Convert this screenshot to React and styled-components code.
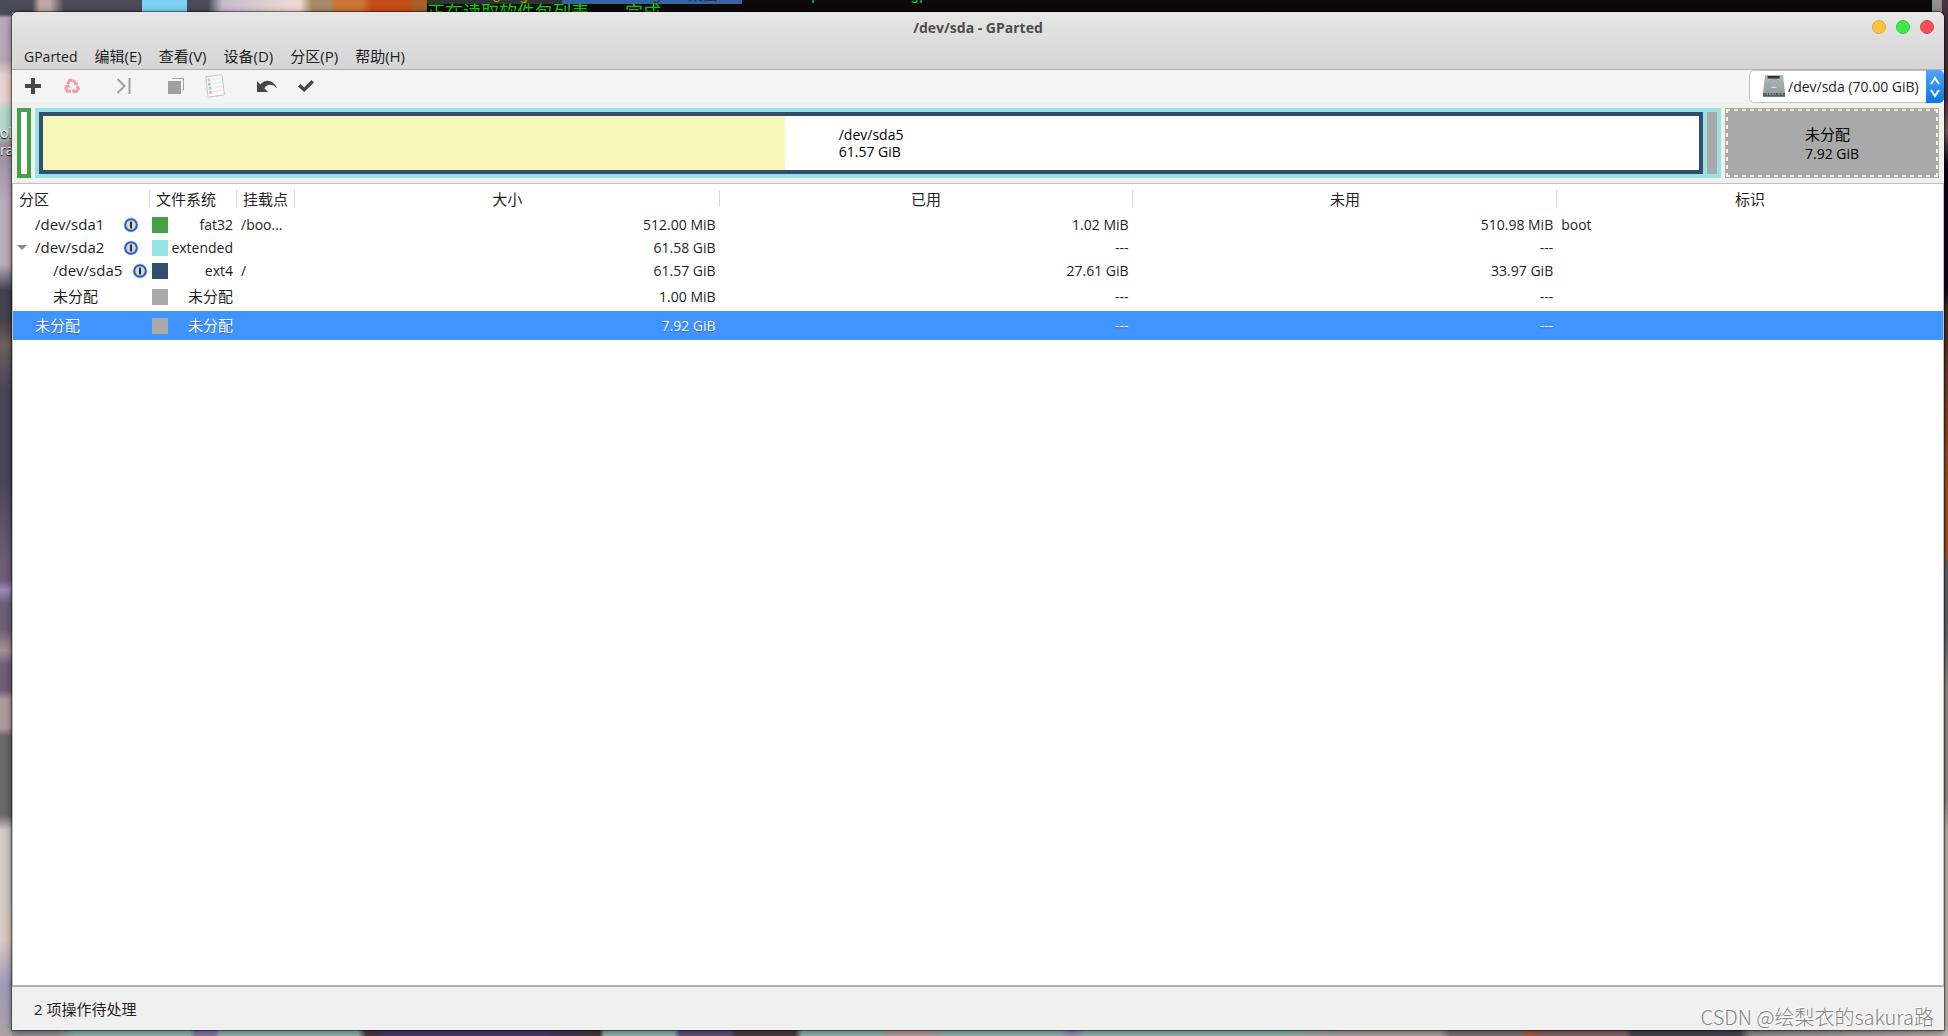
import React from "react";
import styled, { createGlobalStyle, css } from "styled-components";

const GlobalStyle = createGlobalStyle`
  * {
    box-sizing: border-box;
  }
  body {
    margin: 0;
    font-family: "Open Sans", "Noto Sans", "Noto Sans CJK SC", sans-serif;
    font-size: 14px;
    line-height: 17px;
    color: #1f1f1f;
  }
  button, select {
    font: inherit;
    color: inherit;
    margin: 0;
    padding: 0;
    border: 0;
    background: none;
  }
`;

const largeText = css`
  font-size: 15px;
`;

const Desktop = styled.div`
  position: relative;
  display: flex;
  min-height: 100vh;
  padding: 12px 4px 6px 12px;
  overflow: hidden;
  background-color: #8d8590;
  background-image:
    linear-gradient(90deg, #4b4a57 0 32px, #c0a8a4 40px 50px, #4b4a57 64px 142px, #7fd0f5 142px 187px, #4b4a57 187px 208px, #c6bccb 222px, #eed8d4 290px 300px, #a58a68 312px 330px, #cc7433 336px 362px, #c44e18 372px 406px, #a85f2c 416px 427px),
    linear-gradient(#4b4a57 0 14px, #b5a9b6 18px 60px, #e8d2cd 75px 100px, #b5d8cc 110px 132px, #9b8fa0 145px, #b9adb9 200px 265px, #45434d 290px 320px, #6f605f 345px, #4b4758 390px 480px, #6c5e76 560px 580px, #9a8cba 590px, #6f6076 604px 630px, #a89496 650px, #6e6078 665px 690px, #b09c9e 700px 728px, #6b686c 736px 815px, #d0ccc6 830px 900px, #ddc9c0 940px, #9e9cba 985px, #aea4a6 1036px),
    linear-gradient(#4a3040 0 100px, #7c5c58 130px, #15041f 165px 290px, #4a2a28 310px, #a5561c 485px 555px, #65656c 565px 630px, #98908e 690px 800px, #c4bcb4 830px 1036px),
    linear-gradient(90deg, #9a9499 0 55px, #94bfba 75px 190px, #8d80ab 195px 215px, #94bfba 220px 358px, #503b48 366px 375px, #4d3b72 385px 540px, #4a3a40 600px, #94bfba 604px 674px, #64547c 680px 730px, #503f44 735px 795px, #94bfba 802px 880px, #bfa8a6 892px 930px, #94bfba 945px 1060px, #9c90b8 1072px, #94bfba 1085px 1270px, #b8a8aa 1350px 1440px, #85767a 1450px 1520px, #c05a3c 1530px, #886a6c 1545px 1625px, #4c4858 1632px 1740px, #98929a 1750px, #beb4ac 1948px);
  background-size: 427px 12px, 12px 100%, 6px 100%, 100% 6px;
  background-position: left top, left top, right top, left bottom;
  background-repeat: no-repeat;
`;

/* terminal window lying behind the main one */
const Terminal = styled.div`
  position: absolute;
  top: -11px;
  left: 427px;
  right: 7px;
  border-right: 9px solid #8f8f8f;
  background: #0f090b;
  color: #00d800;
  font: 15px/16px "Liberation Mono", "Noto Sans CJK SC", monospace;
  white-space: pre;
`;

const PromptLine = styled.div`
  display: flex;
  height: 15px;
`;

const PromptUser = styled.span`
  padding: 0 16px 0 20px;
  background: #2e3436;
  color: #c4a000;
`;

const PromptPath = styled.span`
  padding: 0 24px 0 18px;
  margin-right: 15px;
  background: #3465a4;
  color: #2e3436;
`;

const OutputLine = styled.div`
  display: flex;
  gap: 36px;
  font-size: 18px;
  line-height: 20px;
`;

const DesktopLabel = styled.span`
  position: absolute;
  top: 124px;
  left: 0;
  width: 14px;
  overflow: hidden;
  color: #fff;
  text-shadow: 0 1px 1px #000;
`;

const Window = styled.main`
  position: relative;
  display: flex;
  flex-direction: column;
  flex: 1;
  min-width: 0;
  border-radius: 6px 6px 0 0;
  overflow: hidden;
  background: #f0f0f0;
  box-shadow: 0 0 1px 1px rgba(0, 0, 0, 0.45), 0 2px 8px rgba(0, 0, 0, 0.5);
`;

const Header = styled.header`
  height: 58px;
  border-bottom: 1px solid #b2b2b2;
  background: linear-gradient(#e6e6e6, #d5d5d5);
`;

const TitleBar = styled.div`
  display: grid;
  grid-template-columns: 1fr auto 1fr;
  align-items: center;
  height: 30px;
  padding: 0 10px;
`;

const Title = styled.h1`
  grid-column: 2;
  margin: 0;
  font-size: 14px;
  font-weight: 700;
  color: #504b4b;
`;

const WindowButtons = styled.div`
  display: flex;
  justify-content: flex-end;
  gap: 10px;
`;

const WindowButton = styled.button`
  width: 14px;
  height: 14px;
  border: 1px solid ${(p) => p.$edge};
  border-radius: 50%;
  background: ${(p) => p.$color};
`;

const MenuBar = styled.nav`
  display: flex;
  align-items: flex-end;
  height: 27px;
  padding-left: 4px;
`;

const MenuButton = styled.button`
  padding: 0 9px 0 8px;
  line-height: 25px;
  ${(p) => p.$large && largeText}
`;

const Toolbar = styled.div`
  display: flex;
  height: 33px;
  padding-left: 1px;
  background: #f4f4f4;
`;

const ToolButton = styled.button`
  display: flex;
  align-items: center;
  justify-content: center;
  width: 39px;
  margin-right: ${(p) => (p.$last ? "13px" : "0")};
  padding-bottom: 2px;
`;

const DevicePicker = styled.div`
  position: relative;
  display: flex;
  margin-left: auto;
`;

const DeviceSelect = styled.select`
  appearance: none;
  width: 195px;
  padding: 0 0 0 38px;
  border: 1px solid #c4c4c4;
  border-right: 0;
  border-radius: 5px;
  background: #fff;
`;

const DiskSlot = styled.span`
  position: absolute;
  top: 4px;
  left: 14px;
  pointer-events: none;
`;

const SelectArrows = styled.span`
  position: absolute;
  top: 0;
  right: 0;
  display: flex;
  align-items: center;
  justify-content: center;
  width: 18px;
  height: 33px;
  border-radius: 0 5px 5px 0;
  background: linear-gradient(#55a3fb, #0a78e4);
  pointer-events: none;
`;

const DiskMap = styled.section`
  display: flex;
  gap: 4px;
  height: 80px;
  padding: 5px;
`;

const PartitionBox = styled.div`
  display: flex;
  align-items: center;
  justify-content: center;
  flex: ${(p) => p.$flex || "0 0 auto"};
  gap: 4px;
  min-width: ${(p) => (p.$color ? "14px" : "10px")};
  border: ${(p) => (p.$color ? `4px solid ${p.$color}` : "0")};
  background: ${(p) => p.$fill || "#fff"};
`;

const Nested = styled(PartitionBox)`
  align-items: stretch;
`;

const dash = (dir) =>
  `repeating-linear-gradient(${dir}, #f7f7b9 0 4px, transparent 4px 8px)`;

const SelectedBox = styled(PartitionBox)`
  border: 1px solid #a9a9a9;
  background-color: #a9a9a9;
  background-image: ${dash("90deg")}, ${dash("90deg")}, ${dash("180deg")}, ${dash("180deg")};
  background-size: 100% 2px, 100% 2px, 2px 100%, 2px 100%;
  background-position: left top, left bottom, left top, right top;
  background-repeat: no-repeat;
`;

const BoxLabel = styled.div`
  color: #000;
`;

const BoxName = styled.div`
  ${(p) => p.$cjk && css`
    ${largeText}
    line-height: 21px;
  `}
`;

const ListArea = styled.section`
  flex: 1;
  border: 1px solid #c0c0c0;
  border-bottom: 2px solid #b2b2b2;
  background: #fff;
`;

const PartitionTable = styled.table`
  width: 100%;
  table-layout: fixed;
  border-collapse: collapse;
`;

const HeadCell = styled.th`
  width: ${(p) => p.$width};
  height: 29px;
  padding: 2px 6px 0;
  text-align: ${(p) => p.$align || "center"};
  font-weight: 400;
  white-space: nowrap;
  ${largeText}
  &:not(:last-child) {
    background: linear-gradient(#d6d6d6, #d6d6d6) right center / 1px 17px no-repeat;
  }
`;

const Row = styled.tr`
  height: ${(p) => (p.$tall ? "29px" : "23px")};
  ${(p) => p.$selected && css`
    background: #4094ff;
    color: #fff;
    text-shadow: 0 1px 1px rgba(0, 0, 0, 0.3);
  `}
`;

const Cell = styled.td`
  padding: 0 ${(p) => p.$right || "4px"} 0 4px;
  text-align: ${(p) => p.$align || "left"};
  overflow: hidden;
  text-overflow: ellipsis;
  white-space: nowrap;
`;

const NameCell = styled.div`
  display: flex;
  align-items: center;
  padding-right: ${(p) => (p.$level ? "0" : "9px")};
`;

const Expander = styled.span`
  display: flex;
  width: ${(p) => (p.$level ? "36px" : "18px")};
`;

const NameText = styled.span`
  margin-right: auto;
  ${largeText}
`;

const FsCell = styled.div`
  display: flex;
  align-items: center;
  justify-content: space-between;
`;

const FsText = styled.span`
  ${(p) => p.$large && largeText}
`;

const Swatch = styled.span`
  flex: none;
  width: 16px;
  height: 16px;
  margin-left: -2px;
  background: ${(p) => p.$color};
`;

const StatusBar = styled.footer`
  display: flex;
  align-items: center;
  height: 43px;
  padding: 2px 22px 0;
  ${largeText}
`;

const Watermark = styled.span`
  position: absolute;
  right: 10px;
  bottom: 0;
  font: 300 20px/26px "Noto Sans CJK SC", sans-serif;
  color: #858585;
  text-shadow: -1px -1px 0 #fff;
`;

const COLORS = {
  fat32: "#46a046",
  extended: "#96e3e4",
  ext4: "#314e6c",
  unused: "#a9a9a9",
};

const MENUS = ["GParted", "编辑(E)", "查看(V)", "设备(D)", "分区(P)", "帮助(H)"];

const COLUMNS = [
  { label: "分区", width: "137px", align: "left" },
  { label: "文件系统", width: "87px", align: "left" },
  { label: "挂载点", width: "58px", align: "left" },
  { label: "大小", width: "22%" },
  { label: "已用", width: "21.4%" },
  { label: "未用", width: "22%" },
  { label: "标识", width: "auto" },
];

const PARTITIONS = [
  { name: "/dev/sda1", locked: true, fs: "fat32", color: COLORS.fat32, mount: "/boot/efi", size: "512.00 MiB", used: "1.02 MiB", unused: "510.98 MiB", flags: "boot" },
  { name: "/dev/sda2", locked: true, open: true, fs: "extended", color: COLORS.extended, size: "61.58 GiB", used: "---", unused: "---" },
  { name: "/dev/sda5", locked: true, level: 1, fs: "ext4", color: COLORS.ext4, mount: "/", size: "61.57 GiB", used: "27.61 GiB", unused: "33.97 GiB" },
  { name: "未分配", level: 1, cjk: true, fs: "未分配", color: COLORS.unused, size: "1.00 MiB", used: "---", unused: "---" },
  { name: "未分配", cjk: true, selected: true, fs: "未分配", color: COLORS.unused, size: "7.92 GiB", used: "---", unused: "---" },
];

const AddIcon = () => (
  <svg width="16" height="16" viewBox="0 0 16 16">
    <path d="M6 0h4v6h6v4h-6v6H6v-6H0V6h6z" fill="#474747" />
  </svg>
);

const RecycleIcon = () => (
  <svg width="16" height="16" viewBox="0 0 16 16" fill="none" stroke="#e9a0a6" strokeWidth="3">
    <path d="M3.4 6.2 5.6 2.3h3" />
    <path d="M9.3 2l2.6 4" />
    <path d="M13.2 8l1.2 2.6-1.6 2.6H9.6" />
    <path d="M7 13.2H3.4L1.8 10.4 3.2 7.8" />
    <path d="M9.2 7.2h4.6V3.4zM10.2 10v6L7.4 13zM.4 7.4 5 6l1.2 4z" fill="#e9a0a6" stroke="none" />
  </svg>
);

const ResizeIcon = () => (
  <svg width="16" height="16" viewBox="0 0 16 16" fill="none" stroke="#a0a0a0" strokeWidth="2">
    <path d="M1.5 1 8.5 8l-7 7M13.5 0v16" />
  </svg>
);

const CopyIcon = () => (
  <svg width="16" height="16" viewBox="0 0 16 16">
    <path d="M0 3h13v13H0z" fill="#a0a0a0" />
    <path d="M4 .5h11.5V12H14" fill="none" stroke="#a0a0a0" />
  </svg>
);

const PasteIcon = () => (
  <svg width="20" height="24" viewBox="0 0 20 24">
    <path d="M.8 2.8 16 .8c.7-.1 1 .2 1.1.9L19.4 20c.1.7-.2 1-.9 1.1L4 23c-.7.1-1-.2-1.1-.9z" fill="#fafafa" stroke="#c4c4c4" />
    <path d="M7 5.4l8.5-1M7.6 9.4l8.4-1M8 13.4l8.6-1M8.6 17.6l8.4-1" stroke="#e4e4e4" />
    <circle cx="4" cy="6" r="1.6" fill="#ffb866" />
    <circle cx="4.4" cy="10" r="1.6" fill="#7cc8f4" />
    <circle cx="5" cy="14.2" r="1.6" fill="#9cdf9f" />
    <circle cx="5.6" cy="18.4" r="1.6" fill="#d2b0ee" />
  </svg>
);

const UndoIcon = () => (
  <svg width="20" height="12" viewBox="0 0 20 12">
    <path d="M0 1v11h11L7.4 8.2C9.8 4.6 15 2.6 20 8.4 17.6 1.4 9.6-2.4 3.4 4.4z" fill="#474747" />
  </svg>
);

const ApplyIcon = () => (
  <svg width="16" height="12" viewBox="0 0 16 12">
    <path d="M0 6.4 2.6 4l3.6 3.4L13.4 0 16 2.4 6.2 12z" fill="#474747" />
  </svg>
);

const DiskIcon = () => (
  <svg width="22" height="24" viewBox="0 0 22 24">
    <defs>
      <linearGradient id="disk" x1="0" y1="0" x2="0" y2="1">
        <stop offset="0" stopColor="#b4bbbd" />
        <stop offset="1" stopColor="#8e979a" />
      </linearGradient>
    </defs>
    <path d="M2 1h18l2 18v4H0v-4z" fill="url(#disk)" />
    <path d="M0 19h22v3.4H0z" fill="#5c6062" />
    <path d="M3 20h10M15 20h5" stroke="#a9adae" strokeDasharray="2 1" />
    <path d="M4.6 2h12v2.6h-12z" fill="#2d3032" />
    <circle cx="11" cy="11.5" r="6" fill="none" stroke="#9aa3a6" />
    <path d="M8.4 13.4h5" stroke="#dfe4e5" />
  </svg>
);

const ArrowsIcon = () => (
  <svg width="10" height="22" viewBox="0 0 10 22" fill="none" stroke="#fff" strokeWidth="2">
    <path d="M1 8l4-6 4 6M1 14l4 6 4-6" />
  </svg>
);

const LockIcon = () => (
  <svg width="16" height="16" viewBox="0 0 16 16">
    <circle cx="8" cy="8" r="7.5" fill="#d8dade" />
    <circle cx="8" cy="8" r="5.8" fill="#d6d6d6" stroke="#1b62c9" strokeWidth="2" />
    <path d="M8 4.4v7.2" stroke="#2c2c2c" strokeWidth="2" />
  </svg>
);

const ExpandIcon = () => (
  <svg width="10" height="6" viewBox="0 0 10 6">
    <path d="M0 0h10L5 5z" fill="#8c8c8c" />
  </svg>
);

const TOOLS = [
  { label: "新建", icon: <AddIcon /> },
  { label: "删除", icon: <RecycleIcon />, last: true, disabled: true },
  { label: "调整大小/移动", icon: <ResizeIcon />, last: true, disabled: true },
  { label: "复制", icon: <CopyIcon />, disabled: true },
  { label: "粘贴", icon: <PasteIcon />, last: true, disabled: true },
  { label: "撤销", icon: <UndoIcon /> },
  { label: "应用", icon: <ApplyIcon /> },
];

function PartitionRow({ item }) {
  return (
    <Row $tall={item.cjk} $selected={item.selected}>
      <Cell $right="2px">
        <NameCell $level={item.level}>
          <Expander $level={item.level}>{item.open && <ExpandIcon />}</Expander>
          <NameText>{item.name}</NameText>
          {item.locked && <LockIcon />}
        </NameCell>
      </Cell>
      <Cell>
        <FsCell>
          <Swatch $color={item.color} />
          <FsText $large={item.cjk}>{item.fs}</FsText>
        </FsCell>
      </Cell>
      <Cell $right="10px">{item.mount}</Cell>
      <Cell $align="right">{item.size}</Cell>
      <Cell $align="right">{item.used}</Cell>
      <Cell $align="right">{item.unused}</Cell>
      <Cell>{item.flags}</Cell>
    </Row>
  );
}

function App() {
  const usedShare = 44.8;

  return (
    <Desktop>
      <GlobalStyle />
      <Terminal>
        <PromptLine>
          <PromptUser>⚡root@login</PromptUser>
          <PromptPath>/home/login/桌面</PromptPath>
          <span>sudo apt install gparted</span>
        </PromptLine>
        <OutputLine>
          <span>正在读取软件包列表</span>
          <span>完成</span>
        </OutputLine>
      </Terminal>
      <DesktopLabel>
        ol
        <br />
        rar
      </DesktopLabel>
      <Window>
        <Header>
          <TitleBar>
            <Title>/dev/sda - GParted</Title>
            <WindowButtons>
              <WindowButton aria-label="最小化" $color="#fcc438" $edge="#dfa92e" />
              <WindowButton aria-label="最大化" $color="#3bea4a" $edge="#2fcb3e" />
              <WindowButton aria-label="关闭" $color="#f54f57" $edge="#dc444c" />
            </WindowButtons>
          </TitleBar>
          <MenuBar>
            {MENUS.map((menu, i) => (
              <MenuButton key={menu} $large={i > 0}>{menu}</MenuButton>
            ))}
          </MenuBar>
        </Header>

        <Toolbar>
          {TOOLS.map((tool) => (
            <ToolButton key={tool.label} aria-label={tool.label} disabled={tool.disabled} $last={tool.last}>
              {tool.icon}
            </ToolButton>
          ))}
          <DevicePicker>
            <DeviceSelect aria-label="设备">
              <option>/dev/sda (70.00 GiB)</option>
            </DeviceSelect>
            <DiskSlot><DiskIcon /></DiskSlot>
            <SelectArrows><ArrowsIcon /></SelectArrows>
          </DevicePicker>
        </Toolbar>

        <DiskMap>
          <PartitionBox $color={COLORS.fat32} />
          <Nested $flex="1687 1 0" $color={COLORS.extended} $fill={COLORS.extended}>
            <PartitionBox
              $flex="1"
              $color={COLORS.ext4}
              $fill={`linear-gradient(90deg, #f7f7b9 ${usedShare}%, #fff ${usedShare}%) padding-box`}
            >
              <BoxLabel>
                <BoxName>/dev/sda5</BoxName>
                <div>61.57 GiB</div>
              </BoxLabel>
            </PartitionBox>
            <PartitionBox $fill={COLORS.unused} />
          </Nested>
          <SelectedBox $flex="213 1 0">
            <BoxLabel>
              <BoxName $cjk>未分配</BoxName>
              <div>7.92 GiB</div>
            </BoxLabel>
          </SelectedBox>
        </DiskMap>

        <ListArea>
          <PartitionTable>
            <thead>
              <tr>
                {COLUMNS.map((col) => (
                  <HeadCell key={col.label} $width={col.width} $align={col.align}>{col.label}</HeadCell>
                ))}
              </tr>
            </thead>
            <tbody>
              {PARTITIONS.map((item, i) => (
                <PartitionRow key={i} item={item} />
              ))}
            </tbody>
          </PartitionTable>
        </ListArea>

        <StatusBar>2 项操作待处理</StatusBar>
        <Watermark>CSDN @绘梨衣的sakura路</Watermark>
      </Window>
    </Desktop>
  );
}

export default App;
